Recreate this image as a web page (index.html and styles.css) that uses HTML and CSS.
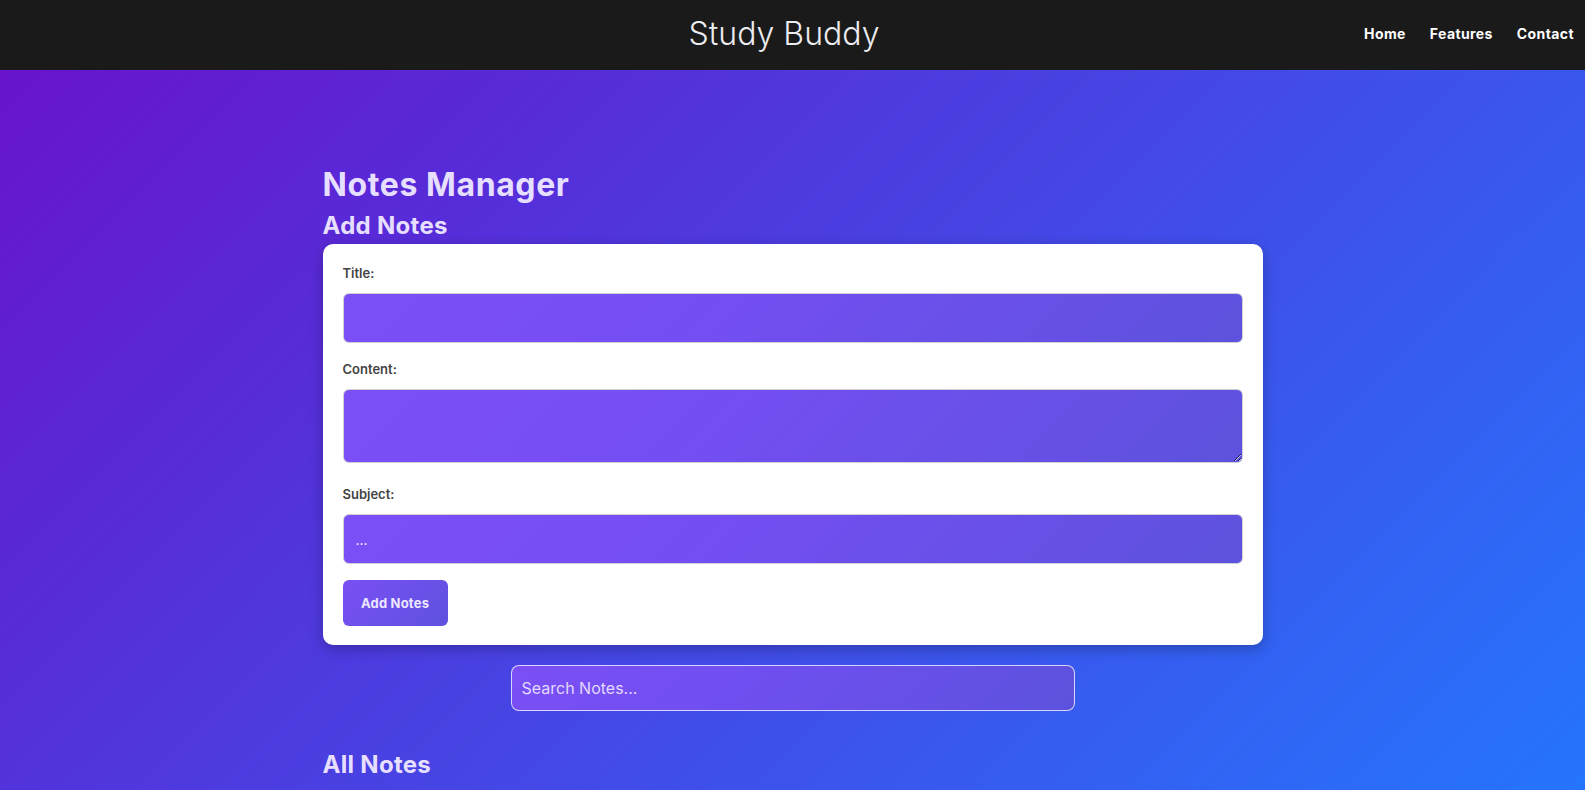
FILE: index.html
```html
<!DOCTYPE html>
<html lang="en">
<head>
<meta charset="UTF-8">
<title>Study Buddy</title>
<link rel="stylesheet" href="styles.css">
</head>
<body>
<header class="topbar">
  <div class="spacer"></div>
  <div class="brand">Study Buddy</div>
  <nav class="nav">
    <a href="#">Home</a>
    <a href="#">Features</a>
    <a href="#">Contact</a>
  </nav>
</header>
<main class="main">
  <div class="container">
    <h1 class="page-title">Notes Manager</h1>
    <h2 class="section-title">Add Notes</h2>
    <form class="card">
      <label class="label" for="title">Title:</label>
      <input class="field" id="title" type="text">
      <label class="label" for="content">Content:</label>
      <textarea class="field area" id="content"></textarea>
      <label class="label" for="subject">Subject:</label>
      <input class="field" id="subject" type="text" placeholder="...">
      <button class="btn" type="button">Add Notes</button>
    </form>
    <div class="search-row">
      <input class="search" type="text" placeholder="Search Notes...">
    </div>
    <h2 class="section-title all">All Notes</h2>
  </div>
</main>
</body>
</html>
```

FILE: styles.css
```css
* { box-sizing: border-box; }
html, body { margin: 0; padding: 0; height: 100%; }
body {
  font-family: "Inter", "Noto Sans", sans-serif;
  background: linear-gradient(135deg, #6a11cb 0%, #2575fc 100%);
  background-attachment: fixed;
  min-height: 100vh;
  overflow: hidden;
}
.topbar {
  height: 70px;
  background: #1a1a1a;
  display: grid;
  grid-template-columns: 1fr auto 1fr;
  align-items: center;
  padding-right: 11px;
  padding-bottom: 4px;
}
.brand {
  color: #ececf0;
  font-size: 32px;
  font-weight: 300;
  padding-right: 6px;
}
.nav {
  justify-self: end;
  display: flex;
  gap: 24px;
}
.nav a {
  color: #ffffff;
  text-decoration: none;
  font-size: 14px;
  font-weight: 700;
  letter-spacing: 0.4px;
}
.container {
  width: 940px;
  margin: 0 auto;
  padding-top: 95px;
}
.page-title {
  margin: 0;
  font-size: 32px;
  line-height: 40px;
  font-weight: 700;
  letter-spacing: 0.6px;
  color: #e6dfff;
}
.section-title {
  margin: 6px 0 3px;
  font-size: 24px;
  line-height: 30px;
  font-weight: 700;
  letter-spacing: 0.3px;
  color: #e6dfff;
}
.card {
  background: #ffffff;
  border-radius: 10px;
  padding: 19px 20px 19px 20px;
  box-shadow: 0 4px 14px rgba(0, 0, 0, 0.25);
  display: flex;
  flex-direction: column;
  align-items: stretch;
}
.label {
  font-size: 13px;
  line-height: 20px;
  font-weight: 600;
  color: #444444;
  margin-bottom: 10px;
}
.field {
  display: block;
  width: 100%;
  height: 50px;
  border: 1px solid #cfcfd8;
  border-radius: 6px;
  background: linear-gradient(135deg, #7c4ff6 0%, #744ef2 40%, #5d52dd 100%);
  color: #ffffff;
  font-family: inherit;
  font-size: 14px;
  padding: 0 12px;
  margin-bottom: 16px;
  outline: none;
}
.field::placeholder { color: #ffffff; }
.area {
  height: 74px;
  resize: vertical;
  margin-bottom: 21px;
}
.btn {
  align-self: flex-start;
  width: 105px;
  height: 46px;
  border: none;
  border-radius: 6px;
  background: linear-gradient(135deg, #7a4ff4 0%, #5e52df 100%);
  color: #ece6ff;
  font-family: inherit;
  font-size: 13px;
  font-weight: 700;
  letter-spacing: 0.2px;
  cursor: pointer;
}
.search-row {
  display: flex;
  justify-content: center;
  margin-top: 20px;
}
.search {
  width: 564px;
  height: 46px;
  border: 1px solid rgba(255, 255, 255, 0.75);
  border-radius: 8px;
  background: linear-gradient(135deg, #7b4ff5 0%, #704ff0 40%, #5c52dd 100%);
  color: #ffffff;
  font-family: inherit;
  font-size: 16px;
  padding: 0 10px;
  outline: none;
}
.search::placeholder { color: #e2d9ff; }
.section-title.all {
  margin-top: 39px;
}
```
